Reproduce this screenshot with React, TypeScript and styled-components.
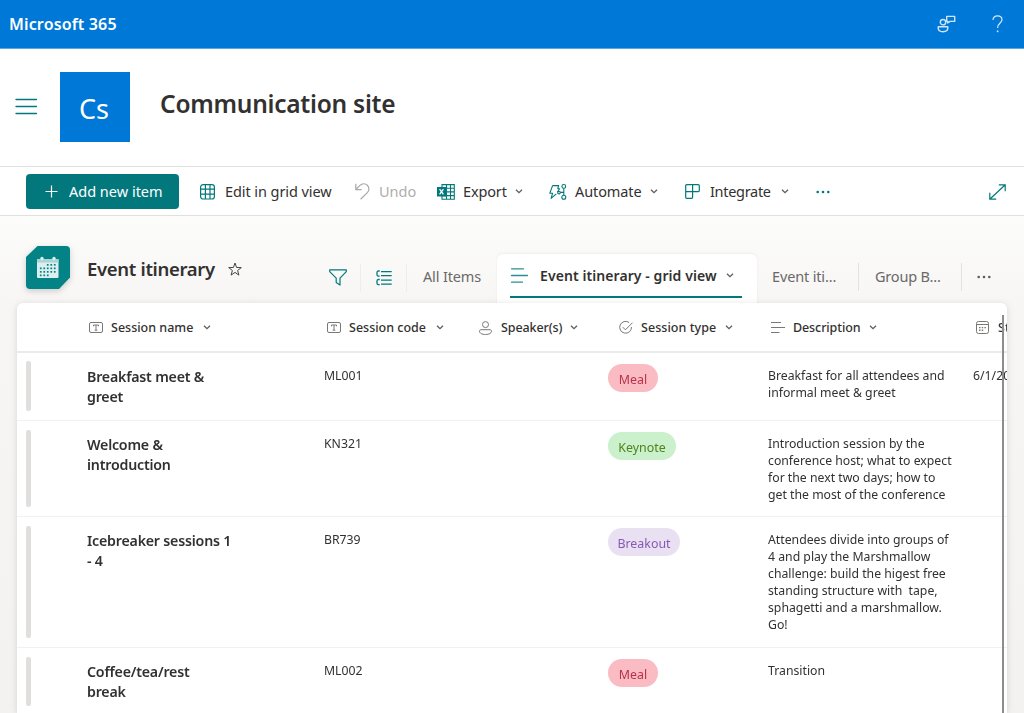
import React from 'react';
import styled, { createGlobalStyle } from 'styled-components';

const TEAL = '#03787c';

const GlobalStyle = createGlobalStyle`
  *, *::before, *::after { box-sizing: border-box; }
  html, body { margin: 0; height: 100%; overflow: hidden; }
  body {
    font-family: 'Noto Sans', 'Open Sans', sans-serif;
    color: #323130;
    background: #fff;
  }
  svg { display: block; flex: none; overflow: visible; }
`;

const Page = styled.div`
  width: 1024px;
  height: 713px;
  display: flex;
  flex-direction: column;
  overflow: hidden;
`;

const SuiteBar = styled.header`
  flex: none;
  height: 49px;
  padding: 1px 21px 0 9px;
  display: flex;
  align-items: center;
  justify-content: space-between;
  background: #0078d7;
  border-bottom: 1px solid #5aa8e6;
  color: #fff;
`;

const Label = styled.span<{ $size: number; $weight?: number; $track?: number; $color?: string }>`
  font-size: ${(p) => p.$size}px;
  font-weight: ${(p) => p.$weight ?? 400};
  letter-spacing: ${(p) => p.$track ?? 0}px;
  color: ${(p) => p.$color ?? 'inherit'};
  white-space: nowrap;
  line-height: 1.36;
`;

const SuiteActions = styled.div`
  display: flex;
  align-items: center;
  gap: 36px;
  padding-bottom: 2px;
`;

const SiteHeader = styled.div`
  flex: none;
  height: 117px;
  padding: 0 15px 2px;
  display: flex;
  align-items: center;
`;

const SiteLogo = styled.div`
  width: 70px;
  height: 70px;
  margin: 0 30px 0 22px;
  padding: 5px 2px 0 0;
  display: grid;
  place-items: center;
  background: #0078d7;
  color: #fff;
`;

const SiteTitle = styled.h1`
  margin: 0 0 5px;
  font-size: 24.5px;
  font-weight: 600;
  line-height: 34px;
  letter-spacing: -0.25px;
`;

const CommandBar = styled.div`
  flex: none;
  height: 50px;
  padding: 1px 18px 0 26px;
  display: flex;
  align-items: center;
  border-top: 1px solid #e3e2e1;
  border-bottom: 1px solid #e1e0df;
`;

const PrimaryButton = styled.button`
  width: 153px;
  height: 35px;
  margin-right: 21px;
  padding: 0 0 0 19px;
  display: flex;
  align-items: center;
  gap: 11px;
  border: 0;
  border-radius: 4px;
  background: ${TEAL};
  color: #fff;
  font-family: inherit;
`;

const Command = styled.div<{ $width: number; $gap: number }>`
  width: ${(p) => p.$width}px;
  display: flex;
  align-items: center;
  gap: ${(p) => p.$gap}px;
`;

const Spacer = styled.div`
  flex: 1;
`;

const ListArea = styled.main`
  flex: 1;
  min-height: 0;
  display: flex;
  flex-direction: column;
  background: linear-gradient(#fcfcfb 0, #f7f6f5 90px, #f3f2f1 100%);
`;

const ListHeader = styled.div`
  flex: none;
  height: 87px;
  padding-left: 26px;
  display: flex;
`;

const ListIcon = styled.div`
  width: 44px;
  height: 43px;
  margin: 30px 17px 0 0;
  filter: drop-shadow(0 2px 3px rgba(0, 0, 0, 0.18));
`;

const ListTitle = styled.div`
  width: 241px;
  height: 105px;
  display: flex;
  align-items: center;
  gap: 13px;
`;

const ViewTools = styled.div`
  display: flex;
  align-items: center;
  height: 33px;
  margin-top: 45px;
`;

const ViewTool = styled.div<{ $width: number; $indent: number }>`
  width: ${(p) => p.$width}px;
  height: 28px;
  padding-left: ${(p) => p.$indent}px;
  display: flex;
  align-items: center;
  border-right: 1px solid #eeedec;
`;

const Tab = styled.div<{ $width: number; $indent: number; $last?: boolean }>`
  width: ${(p) => p.$width}px;
  height: 28px;
  margin-top: 47px;
  padding-left: ${(p) => p.$indent}px;
  display: flex;
  align-items: center;
  border-right: ${(p) => (p.$last ? 0 : 1)}px solid #e3e2e1;
`;

const PlainTab = styled(Tab)`
  border-right: 0;
`;

const ActiveTab = styled.div`
  width: 260px;
  height: 50px;
  margin-top: 38px;
  padding: 0 15px 0 13px;
  flex: none;
  border-radius: 6px 6px 0 0;
  background: #fff;
  box-shadow: 0 -1px 3px rgba(0, 0, 0, 0.05);
`;

const ActiveTabBody = styled.div`
  height: 44px;
  display: flex;
  align-items: center;
  border-bottom: 2px solid ${TEAL};
`;

const PanelShadow = styled.div`
  flex: 1;
  min-height: 0;
  display: flex;
  filter: drop-shadow(0 1px 3px rgba(0, 0, 0, 0.13));
`;

const Panel = styled.section`
  position: relative;
  flex: none;
  width: 990px;
  margin-left: 17px;
  overflow: hidden;
  border-radius: 6px 6px 0 0;
  background: #fff;
`;

const ScrollThumb = styled.div`
  position: absolute;
  top: 12px;
  right: 3px;
  bottom: 0;
  width: 2px;
  background: #8f8d8b;
`;

const columns = '70px 237px 152px 132px 160px 205px 60px';

const HeadRow = styled.div`
  display: grid;
  grid-template-columns: ${columns};
  height: 50px;
  padding-top: 1px;
  align-items: center;
  border-bottom: 2px solid #ebeae9;
`;

const HeadCell = styled.div<{ $indent: number }>`
  display: flex;
  align-items: center;
  padding-left: ${(p) => p.$indent}px;
`;

const HeadIcon = styled.span`
  width: 22px;
  flex: none;
`;

const Chevron = styled.span<{ $gap: number }>`
  margin-left: ${(p) => p.$gap}px;
`;

const Row = styled.div<{ $height: number }>`
  display: grid;
  grid-template-columns: ${columns};
  height: ${(p) => p.$height}px;
  border-bottom: 1px solid #f2f1f0;
`;

const RowMarker = styled.div<{ $first: boolean }>`
  width: 5px;
  margin: ${(p) => (p.$first ? 8 : 9)}px 0 9px 9px;
  border-radius: 2px;
  background: #e0dfde;
`;

const NameCell = styled.div`
  padding-top: 14px;
  font-size: 14.2px;
  font-weight: 600;
  line-height: 20px;
  letter-spacing: -0.2px;
  white-space: pre-line;
`;

const Cell = styled.div`
  padding-top: 14px;
  font-size: 12.25px;
  line-height: 17px;
  white-space: pre;
`;

const Pill = styled.span<{ $bg: string; $fg: string; $width: number }>`
  display: flex;
  align-items: center;
  justify-content: center;
  width: ${(p) => p.$width}px;
  height: 28px;
  margin-top: 11px;
  padding-top: 2px;
  border-radius: 14px;
  background: ${(p) => p.$bg};
  color: ${(p) => p.$fg};
  font-size: 12.4px;
`;

const ChevronIcon = ({ color = '#605e5c' }: { color?: string }) => (
  <svg width="8" height="5" viewBox="0 0 8 5" fill="none" stroke={color} strokeWidth="1.3">
    <path d="M1 .7 4 3.700 7 .7" />
  </svg>
);

const MenuIcon = () => (
  <svg width="23" height="17" fill="none" stroke={TEAL} strokeWidth="1.3" strokeLinecap="round">
    <path d="M1 1.500h20.500M1 8.500h20.500M1 15.500h20.500" />
  </svg>
);

const FeedbackIcon = () => (
  <svg width="19" height="18" viewBox="0 0 19 18" fill="none" stroke="#cfe5f8" strokeWidth="1.4">
    <circle cx="6" cy="7.200" r="2.700" />
    <path d="M1.200 11.700h9.600v1.400c0 2.200-1.900 3.600-4.800 3.600s-4.800-1.400-4.800-3.600zM9.700 1.400h8v5h-4.600l-2.400 1.500V6.400h-1z" strokeLinejoin="round" />
  </svg>
);

const HelpIcon = () => (
  <svg width="11" height="18" viewBox="0 0 11 18" fill="none" stroke="#d7eafa" strokeWidth="1.2">
    <path d="M1 4.900C1 2.500 2.900.800 5.500.800s4.500 1.600 4.500 4C10 8.200 5.600 8 5.600 12.900" />
    <path d="M5.600 15.500v1.700" strokeWidth="1.5" />
  </svg>
);

const PlusIcon = () => (
  <svg width="13" height="13" stroke="#fff" strokeWidth="1.2">
    <path d="M6.500.5v12M.5 6.500h12" />
  </svg>
);

const GridIcon = () => (
  <svg width="15" height="16" viewBox="0 0 15 16" fill="none" stroke={TEAL} strokeWidth="1.2">
    <rect x=".6" y=".6" width="13.800" height="14.400" rx="2.500" />
    <path d="M5.400.6V15M10 .6V15M.6 5.200h13.800M.6 10.200h13.800" />
  </svg>
);

const UndoIcon = () => (
  <svg width="15" height="17" viewBox="0 0 15 17" fill="none" stroke="#aaa8a6" strokeWidth="1.2">
    <path d="M.8.8v5.800h5.800M1 6.300l4-3.900c2.200-2.100 5.300-2.100 7.300-.2 2.200 2.100 2.100 5.300 0 7.400L5.600 16.200" />
  </svg>
);

const ExcelIcon = () => (
  <svg width="18" height="16" viewBox="0 0 18 16" fill="none" stroke={TEAL} strokeWidth="1.1">
    <path d="M5 .6h12.300v14.600H5zM5 4.200h12.300M5 7.900h12.300M5 11.600h12.300M9.500.6v14.600M13.500.6v14.600" />
    <rect x="0" y="3" width="9" height="9.500" fill={TEAL} stroke="none" />
    <path d="m2.600 5.200 3.800 5.200M6.400 5.200l-3.800 5.200" stroke="#fff" strokeWidth="1.3" />
  </svg>
);

const AutomateIcon = () => (
  <svg width="18" height="16" viewBox="0 0 18 16" fill="none" stroke={TEAL} strokeWidth="1.1">
    <path d="M3.600 1.600h6.100L8.600 4.700M3.600 1.600.8 9.200h2.800l-1.500 5.200 5.200-4.600M8.600 4.700h2L8.300 8.300" strokeLinejoin="round" />
    <path d="M11.300 8.400h3.500M14.800 4.300v7" />
    <circle cx="14.800" cy="2.400" r="1.900" />
    <circle cx="14.800" cy="13.300" r="2" />
    <circle cx="10" cy="8.600" r="1.300" />
  </svg>
);

const IntegrateIcon = () => (
  <svg width="15" height="15" viewBox="0 0 15 15" fill="none" stroke={TEAL} strokeWidth="1.2">
    <path d="M2 .7h11.300c.6 0 1 .4 1 1v4.900c0 .6-.4 1-1 1H7.600v5.700c0 .6-.4 1-1 1H1.700c-.6 0-1-.4-1-1V1.700c0-.6.4-1 1-1zM7.600.7v6.900M.7 7.600h6.900" />
  </svg>
);

const DotsIcon = ({ color }: { color: string }) => (
  <svg width="14" height="4" fill={color}>
    <circle cx="1.700" cy="2" r="1.300" />
    <circle cx="7" cy="2" r="1.300" />
    <circle cx="12.300" cy="2" r="1.300" />
  </svg>
);

const ExpandIcon = () => (
  <svg width="17" height="16" viewBox="0 0 17 16" fill="none" stroke={TEAL} strokeWidth="1.2">
    <path d="M1 15 16 1M9.800.8h6.400v6.400M.8 8.800v6.400h6.400" />
  </svg>
);

const dotRows: number[][] = [
  [3, 4, 5],
  [1, 2, 3, 4, 5],
  [1, 2, 3, 4, 5],
  [1, 2, 3],
];

const CalendarTile = () => (
  <svg width="44" height="43" viewBox="0 0 44 43">
    <path d="M11.500 0H40a4 4 0 0 1 4 4v27.500L33 43H4a4 4 0 0 1-4-4V11z" fill="#048387" />
    <path d="M11 13.500h21.500V31a1 1 0 0 1-1 1H12a1 1 0 0 1-1-1z" fill="#dceeee" />
    <path d="M11 13h21.500v3.500H11z" fill="#a9d5d6" />
    <circle cx="16" cy="12.500" r="1.700" fill="#dceeee" />
    <circle cx="28" cy="12.500" r="1.700" fill="#dceeee" />
    {dotRows.map((row, y) =>
      row.map((x) => (
        <rect key={`${x}-${y}`} x={10.4 + x * 3.5} y={18 + y * 3.5} width="1.700" height="1.700" fill="#048387" />
      )),
    )}
  </svg>
);

const StarIcon = () => (
  <svg width="14" height="14" viewBox="0 0 14 14" fill="none" stroke="#484644" strokeWidth="1">
    <path d="m7 1 1.600 4.500 4.700.1-3.700 2.900 1.300 4.600L7 10.400l-3.900 2.700 1.300-4.600L.7 5.600l4.700-.1z" />
  </svg>
);

const FilterIcon = () => (
  <svg width="18" height="17" viewBox="0 0 18 17" fill="none" stroke={TEAL} strokeWidth="1.2" strokeLinejoin="round">
    <path d="M.7.800h16.600v1.800L11 9.200v6.900l-3.800-2.600V9.200L.7 2.600z" />
  </svg>
);

const GroupIcon = () => (
  <svg width="16" height="16" viewBox="0 0 16 16" fill="none" stroke={TEAL} strokeWidth="1.3">
    <path d="M5 1.700h10.700M5 5.700h10.700M5 10.200h10.700M5 14.200h10.700" />
    <path d="M3.700 1H2.500C1.500 1 1 1.500 1 2.400v2.400c0 .9.500 1.400 1.500 1.400h1.200M3.700 9.500H2.500C1.500 9.500 1 10 1 10.900v2.400c0 .9.500 1.400 1.500 1.400h1.200" />
  </svg>
);

const ViewIcon = () => (
  <svg width="18" height="15" fill="none" stroke="#2a8f92" strokeWidth="1.3" strokeLinecap="round">
    <path d="M1.500.8h12M1.500 7.500h16M1.500 14.200h11" />
  </svg>
);

const GRAY = '#7a7876';

const TextTypeIcon = () => (
  <svg width="14" height="11" viewBox="0 0 14 11" fill="none" stroke={GRAY} strokeWidth="1">
    <rect x=".5" y=".5" width="13" height="10" rx="1.500" />
    <path d="M4.500 4.300V3h5v1.300M7 3v5.200M5.700 8.200h2.600" />
  </svg>
);

const PersonIcon = () => (
  <svg width="13" height="14" viewBox="0 0 13 14" fill="none" stroke={GRAY} strokeWidth="1">
    <circle cx="6.500" cy="3.600" r="3" />
    <path d="M2 8.700h9c.9 0 1.500.6 1.500 1.500 0 2-2.400 3.300-6 3.300s-6-1.300-6-3.300c0-.9.600-1.500 1.500-1.500z" />
  </svg>
);

const CheckIcon = () => (
  <svg width="14" height="13" viewBox="0 0 14 13" fill="none" stroke={GRAY} strokeWidth="1">
    <path d="M10.200 1.600A5.900 5.900 0 1 0 12.500 6M3.800 6.200l2.600 2.600L13.500 1.700" />
  </svg>
);

const LinesIcon = () => (
  <svg width="15" height="11" fill="none" stroke={GRAY} strokeWidth="1">
    <path d="M0 .5h10M0 5.500h14M0 10.500h8.500" />
  </svg>
);

const DateIcon = () => (
  <svg width="13" height="13" viewBox="0 0 13 13" fill="none" stroke={GRAY} strokeWidth="1">
    <rect x=".5" y=".5" width="12" height="12" rx="2" />
    <path d="M.5 3.500h12" />
    <path d="M3 6.600h7.500M3 9.300h4.500" strokeWidth="1.4" strokeDasharray="1.500 1.200" />
  </svg>
);

const heads = [
  { text: 'Session name', icon: <TextTypeIcon />, indent: 2, gap: 10 },
  { text: 'Session code', icon: <TextTypeIcon />, indent: 3, gap: 10 },
  { text: 'Speaker(s)', icon: <PersonIcon />, indent: 3, gap: 8, track: -0.1 },
  { text: 'Session type', icon: <CheckIcon />, indent: 11, gap: 9, track: 0.05 },
  { text: 'Description', icon: <LinesIcon />, indent: 3, gap: 9, track: -0.1 },
  { text: 'Start', icon: <DateIcon />, indent: 3, gap: 9 },
];

const pills = {
  Meal: { bg: '#fabbc3', fg: '#b8324a', width: 50 },
  Keynote: { bg: '#caf0cc', fg: '#4f831c', width: 68 },
  Breakout: { bg: '#e9e1f1', fg: '#8659b8', width: 72 },
};

type Session = {
  name: string;
  code: string;
  type: keyof typeof pills;
  description: string;
  start?: string;
  height: number;
};

const sessions: Session[] = [
  { name: 'Breakfast meet &\ngreet', code: 'ML001', type: 'Meal', description: 'Breakfast for all attendees and\ninformal meet & greet', start: '6/1/2022', height: 68 },
  { name: 'Welcome &\nintroduction', code: 'KN321', type: 'Keynote', description: 'Introduction session by the\nconference host; what to expect\nfor the next two days; how to\nget the most of the conference', height: 96 },
  { name: 'Icebreaker sessions 1\n- 4', code: 'BR739', type: 'Breakout', description: 'Attendees divide into groups of\n4 and play the Marshmallow\nchallenge: build the higest free\nstanding structure with  tape,\nsphagetti and a marshmallow.\nGo!', height: 131 },
  { name: 'Coffee/tea/rest\nbreak', code: 'ML002', type: 'Meal', description: 'Transition', height: 68 },
];

export default function App() {
  return (
    <Page>
      <GlobalStyle />
      <SuiteBar>
        <Label $size={16} $weight={600} $track={0.15}>Microsoft 365</Label>
        <SuiteActions>
          <FeedbackIcon />
          <HelpIcon />
        </SuiteActions>
      </SuiteBar>
      <SiteHeader>
        <MenuIcon />
        <SiteLogo><Label $size={27}>Cs</Label></SiteLogo>
        <SiteTitle>Communication site</SiteTitle>
      </SiteHeader>
      <CommandBar>
        <PrimaryButton>
          <PlusIcon />
          <Label $size={14.5}>Add new item</Label>
        </PrimaryButton>
        <Command $width={155} $gap={10}><GridIcon /><Label $size={14.5} $track={-0.08}>Edit in grid view</Label></Command>
        <Command $width={82} $gap={9}><UndoIcon /><Label $size={14.5} $color="#b0aeac">Undo</Label></Command>
        <Command $width={112} $gap={8}><ExcelIcon /><Label $size={14.5} $track={-0.15}>Export</Label><ChevronIcon /></Command>
        <Command $width={136} $gap={8}><AutomateIcon /><Label $size={14.5} $track={-0.1}>Automate</Label><ChevronIcon /></Command>
        <Command $width={131} $gap={10}><IntegrateIcon /><Label $size={14.5} $track={-0.3}>Integrate</Label><ChevronIcon /></Command>
        <DotsIcon color={TEAL} />
        <Spacer />
        <ExpandIcon />
      </CommandBar>
      <ListArea>
        <ListHeader>
          <ListIcon><CalendarTile /></ListIcon>
          <ListTitle>
            <Label $size={18.5} $weight={600} $track={-0.32}>Event itinerary</Label>
            <StarIcon />
          </ListTitle>
          <ViewTools>
            <ViewTool $width={33} $indent={1}><FilterIcon /></ViewTool>
            <ViewTool $width={46} $indent={15}><GroupIcon /></ViewTool>
          </ViewTools>
          <PlainTab $width={90} $indent={16}><Label $size={14.5} $track={-0.15} $color="#6b6967">All Items</Label></PlainTab>
          <ActiveTab>
            <ActiveTabBody>
              <ViewIcon />
              <Chevron $gap={12}><Label $size={14} $weight={600} $track={0.08}>Event itinerary - grid view</Label></Chevron>
              <Chevron $gap={9}><ChevronIcon /></Chevron>
            </ActiveTabBody>
          </ActiveTab>
          <Tab $width={102} $indent={15}><Label $size={14.5} $track={-0.15} $color="#6b6967">Event iti...</Label></Tab>
          <Tab $width={103} $indent={16}><Label $size={14.5} $track={-0.2} $color="#6b6967">Group B...</Label></Tab>
          <Tab $width={50} $indent={15} $last><DotsIcon color="#605e5c" /></Tab>
        </ListHeader>
        <PanelShadow>
          <Panel>
            <HeadRow>
              <span />
              {heads.map((h) => (
                <HeadCell key={h.text} $indent={h.indent}>
                  <HeadIcon>{h.icon}</HeadIcon>
                  <Label $size={12.5} $weight={500} $track={h.track}>{h.text}</Label>
                  <Chevron $gap={h.gap}><ChevronIcon /></Chevron>
                </HeadCell>
              ))}
            </HeadRow>
            {sessions.map((s, i) => {
              const pill = pills[s.type];
              return (
                <Row key={s.code} $height={s.height}>
                  <RowMarker $first={i === 0} />
                  <NameCell>{s.name}</NameCell>
                  <Cell>{s.code}</Cell>
                  <Cell />
                  <div><Pill $bg={pill.bg} $fg={pill.fg} $width={pill.width}>{s.type}</Pill></div>
                  <Cell>{s.description}</Cell>
                  <Cell>{s.start}</Cell>
                </Row>
              );
            })}
            <ScrollThumb />
          </Panel>
        </PanelShadow>
      </ListArea>
    </Page>
  );
}
